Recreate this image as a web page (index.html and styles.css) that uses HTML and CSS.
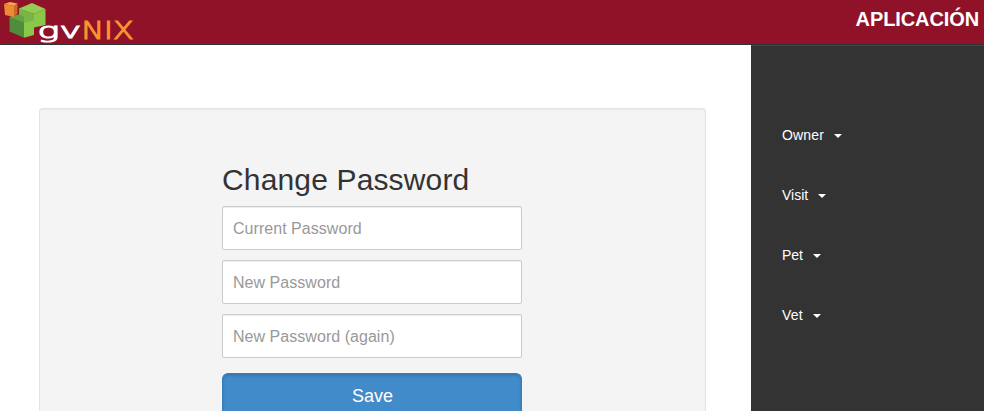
FILE: index.html
```html
<!DOCTYPE html>
<html lang="es">
<head>
<meta charset="utf-8">
<title>Change Password</title>
<link rel="stylesheet" href="styles.css">
</head>
<body>
<header class="header">
  <svg class="logo" width="140" height="44" viewBox="0 0 140 44" role="img" aria-label="gvNIX">
    <path fill="#4f8c3c" d="M9.500 17 19 14.500V8.500L30 12V22L24 37.800 9.500 31.500Z"/>
    <path fill="#64a242" d="M9.500 17 19 14.500 25 18 24 22.500Z"/>
    <path fill="#94cb52" d="M19 8.500 32 3 45.500 9 34 14Z"/>
    <path fill="#78b547" d="M19 8.500 34 14V21L24 23V17L19 14.500Z"/>
    <path fill="#8bc84a" d="M34 14 45.500 9V25L34 27.500V35L24 37.800V22.500L34 20.500Z"/>
    <path fill="#f9a34f" d="M4 4 10 2 17.500 3.500 14 6Z"/>
    <path fill="#ee8a36" d="M4 4 14 6V17L5 15Z"/>
    <path fill="#c96a27" d="M14 6 17.500 3.500V13.500L14 17Z"/>
    <text class="logo-gv" x="37.500" y="38" textLength="43.500" lengthAdjust="spacingAndGlyphs">gv</text>
    <text class="logo-nix" x="81.500" y="38.500" textLength="52" lengthAdjust="spacingAndGlyphs">NIX</text>
  </svg>
  <div class="app-name">APLICACIÓN</div>
</header>
<div class="page">
  <main class="content">
    <section class="well">
      <form class="form">
        <h2 class="title">Change Password</h2>
        <input class="field" type="password" placeholder="Current Password">
        <input class="field" type="password" placeholder="New Password">
        <input class="field" type="password" placeholder="New Password (again)">
        <button class="save" type="button">Save</button>
      </form>
    </section>
  </main>
  <nav class="sidebar">
    <a class="item owner">Owner<span class="caret"></span></a>
    <a class="item">Visit<span class="caret"></span></a>
    <a class="item">Pet<span class="caret"></span></a>
    <a class="item vet">Vet<span class="caret"></span></a>
  </nav>
</div>
</body>
</html>
```
FILE: styles.css
```css
* { box-sizing: border-box; }

body {
  margin: 0;
  height: 411px;
  overflow: hidden;
  background: #fff;
  color: #333;
  font: 14px/20px "Liberation Sans", Arial, sans-serif;
}

.header {
  display: flex;
  justify-content: space-between;
  height: 45px;
  padding-right: 5px;
  background: #8f1228;
  border-bottom: 1px solid #333;
}

.logo { display: block; }
.logo text { font-family: "DejaVu Sans", sans-serif; font-weight: 200; }
.logo-gv { font-size: 21px; fill: #fff; stroke: #fff; stroke-width: 1.1px; }
.logo-nix { font-size: 24px; fill: #f7942f; stroke: #f7942f; stroke-width: 1.2px; }

.app-name {
  padding-top: 8px;
  color: #fff;
  font-size: 20px;
  font-weight: bold;
  line-height: 22px;
  letter-spacing: -.1px;
}

.page {
  display: flex;
  height: 366px;
  overflow: hidden;
}

.content {
  flex: 0 0 751px;
  padding: 63px 45px 0 39px;
}

.well {
  height: 303px;
  padding-top: 54px;
  overflow: hidden;
  background: #f4f4f4;
  border: 1px solid #e3e3e3;
  border-bottom: 0;
  border-radius: 4px 4px 0 0;
  box-shadow: inset 0 1px 1px rgba(0, 0, 0, .05);
}

.form {
  display: flex;
  flex-direction: column;
  width: 300px;
  margin-left: 182px;
}

.title {
  margin: 0 0 10px;
  font-size: 30px;
  font-weight: normal;
  line-height: 33px;
  letter-spacing: .15px;
}

.field {
  width: 300px;
  height: 44px;
  margin: 0 0 10px;
  padding: 11px 10px 9px;
  background: #fff;
  border: 1px solid #ccc;
  border-radius: 2px;
  box-shadow: inset 0 1px 1px rgba(0, 0, 0, .075);
  font: 16px/22px "Liberation Sans", Arial, sans-serif;
  letter-spacing: .04px;
}

.field::placeholder { color: #999; opacity: 1; }

.save {
  height: 38px;
  margin-top: 5px;
  padding: 7px 0 0 1px;
  background: #428bca;
  border: 1px solid #357ebd;
  border-bottom: 0;
  border-radius: 6px 6px 0 0;
  box-shadow: inset 0 2px 3px rgba(0, 0, 0, .15);
  color: #fff;
  font: 18px/24px "Liberation Sans", Arial, sans-serif;
}

.sidebar {
  flex: 1;
  padding: 59px 0 0 31px;
  background: #333;
  border-top: 1px solid #444;
}

.item {
  display: flex;
  align-items: center;
  height: 60px;
  color: #fff;
}

.caret {
  margin: 2px 0 0 10px;
  border-top: 4px solid #fff;
  border-right: 4px solid transparent;
  border-left: 4px solid transparent;
}

.owner { letter-spacing: .15px; }
.vet { letter-spacing: .2px; }
```
